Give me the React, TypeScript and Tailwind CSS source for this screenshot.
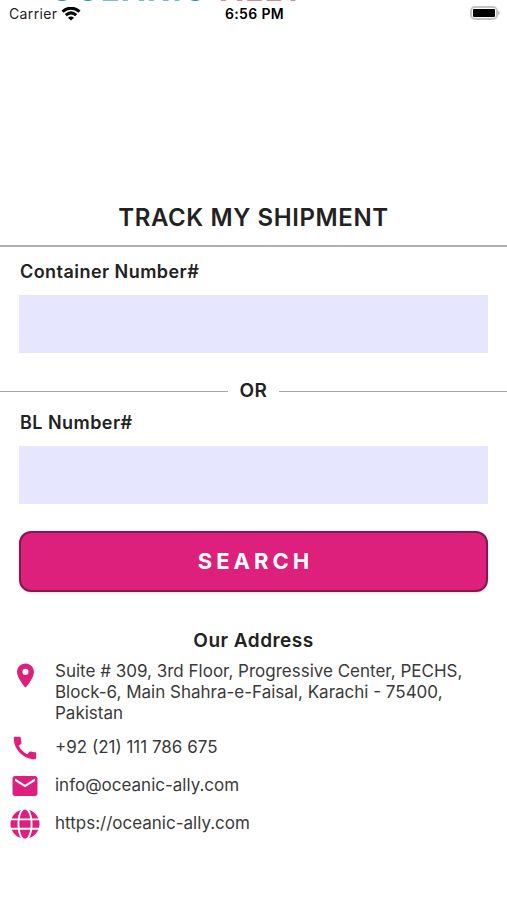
import { useState } from 'react';
import { FaGlobe } from 'react-icons/fa';
import { MdCall, MdEmail, MdLocationOn } from 'react-icons/md';

const contacts = [
    { icon: MdCall, label: '+92 (21) 111 786 675', href: 'tel:+9221111786675' },
    { icon: MdEmail, label: 'info@oceanic-ally.com', href: 'mailto:info@oceanic-ally.com' },
    { icon: FaGlobe, label: 'https://oceanic-ally.com', href: 'https://oceanic-ally.com' },
];

const StatusBar = () => (
    <div className="relative grid grid-cols-3 items-center h-7 pl-[9px] pr-[7px] overflow-hidden text-sm leading-4 tracking-wide">
        {/* Logo scrolled up behind the status bar */}
        <div className="absolute -top-[26px] left-[50px] flex gap-3 text-[31px] leading-8 font-bold tracking-[2px]" aria-hidden="true">
            <span className="text-[#2b93cf]">OC<span className="text-[#74bbe0]">EANI</span>C</span>
            <span className="text-[#e08490]">ALLY</span>
        </div>
        <div className="relative flex items-center gap-1 text-[#222]">
            <span>Carrier</span>
            <svg width="20" height="15" viewBox="0 0 20 15" fill="none" stroke="black" strokeWidth="3">
                <path d="M1.5 4.7C6.5 0 13.5 0 18.5 4.7" />
                <path d="M4.8 8.2C8 5.4 12 5.4 15.2 8.2" />
                <path d="M10 13.5L7 10.7C8.8 9.2 11.2 9.2 13 10.7Z" fill="black" stroke="none" />
            </svg>
        </div>
        <div className="relative text-center font-semibold text-black">6:56 PM</div>
        <svg className="relative justify-self-end" width="31" height="16" viewBox="0 0 31 16">
            <rect x="2" y="1" width="26" height="12" rx="4" fill="white" stroke="#c4c4c4" strokeWidth="2" />
            <rect x="4" y="3" width="22" height="8" rx="1" fill="black" />
            <path d="M29 5C31.2 5.5 31.2 8.5 29 9Z" fill="#bbb" />
        </svg>
    </div>
);

export default function App() {
    const [container, setContainer] = useState('');
    const [bl, setBl] = useState('');

    return (
        <div className="min-h-screen bg-white font-['Inter',sans-serif] text-[#222]">
            <StatusBar />

            <main className="pt-44">
                <h1 className="text-center text-2xl leading-7 font-semibold tracking-wide">TRACK MY SHIPMENT</h1>
                <hr className="mt-[13px] border-t-2 border-[#b0b0b0]" />

                <form onSubmit={e => e.preventDefault()}>
                    <div className="px-[19px] pt-[13px]">
                        <label htmlFor="container" className="block pl-px text-lg leading-6 font-semibold tracking-wide">Container Number#</label>
                        <input
                            id="container"
                            value={container}
                            onChange={e => setContainer(e.target.value)}
                            className="block w-full h-[58px] mt-[11px] px-3 bg-[#e6e6ff] text-lg outline-none"
                        />
                    </div>

                    <div className="flex items-center gap-3 mt-[26px]">
                        <div className="flex-1 h-px bg-[#a5a5a5]" />
                        <span className="text-[19px] leading-6 font-semibold tracking-wide">OR</span>
                        <div className="flex-1 h-px bg-[#a5a5a5]" />
                    </div>

                    <div className="px-[19px] pt-2">
                        <label htmlFor="bl" className="block pl-px text-lg leading-6 font-semibold tracking-wide">BL Number#</label>
                        <input
                            id="bl"
                            value={bl}
                            onChange={e => setBl(e.target.value)}
                            className="block w-full h-[58px] mt-[11px] px-3 bg-[#e6e6ff] text-lg outline-none"
                        />
                        <button
                            type="submit"
                            className="block w-full h-[61px] mt-[27px] pl-1 rounded-xl border-2 border-[#871650] bg-[#dd207c] text-[22px] font-bold tracking-[4px] text-white shadow"
                        >
                            SEARCH
                        </button>
                    </div>
                </form>

                <section className="pt-[37px]">
                    <h2 className="text-center text-[19px] leading-6 font-semibold tracking-wide">Our Address</h2>
                    <address className="not-italic text-[17px] text-[#3a3a3a]">
                        <div className="flex gap-[15px] mt-2 pl-[10px] pr-8">
                            <div className="flex w-[30px] shrink-0 justify-center">
                                <MdLocationOn size={29} color="#dd207c" />
                            </div>
                            <p className="leading-[21px]">
                                Suite # 309, 3rd Floor, Progressive Center, PECHS, Block-6, Main Shahra-e-Faisal, Karachi - 75400, Pakistan
                            </p>
                        </div>
                        <ul className="pt-[5px]">
                            {contacts.map(({ icon: Icon, label, href }) => (
                                <li key={href} className="flex h-[38px] items-center gap-[15px] pl-[10px]">
                                    <Icon size={30} color="#dd207c" />
                                    <a href={href}>{label}</a>
                                </li>
                            ))}
                        </ul>
                    </address>
                </section>
            </main>
        </div>
    );
}
